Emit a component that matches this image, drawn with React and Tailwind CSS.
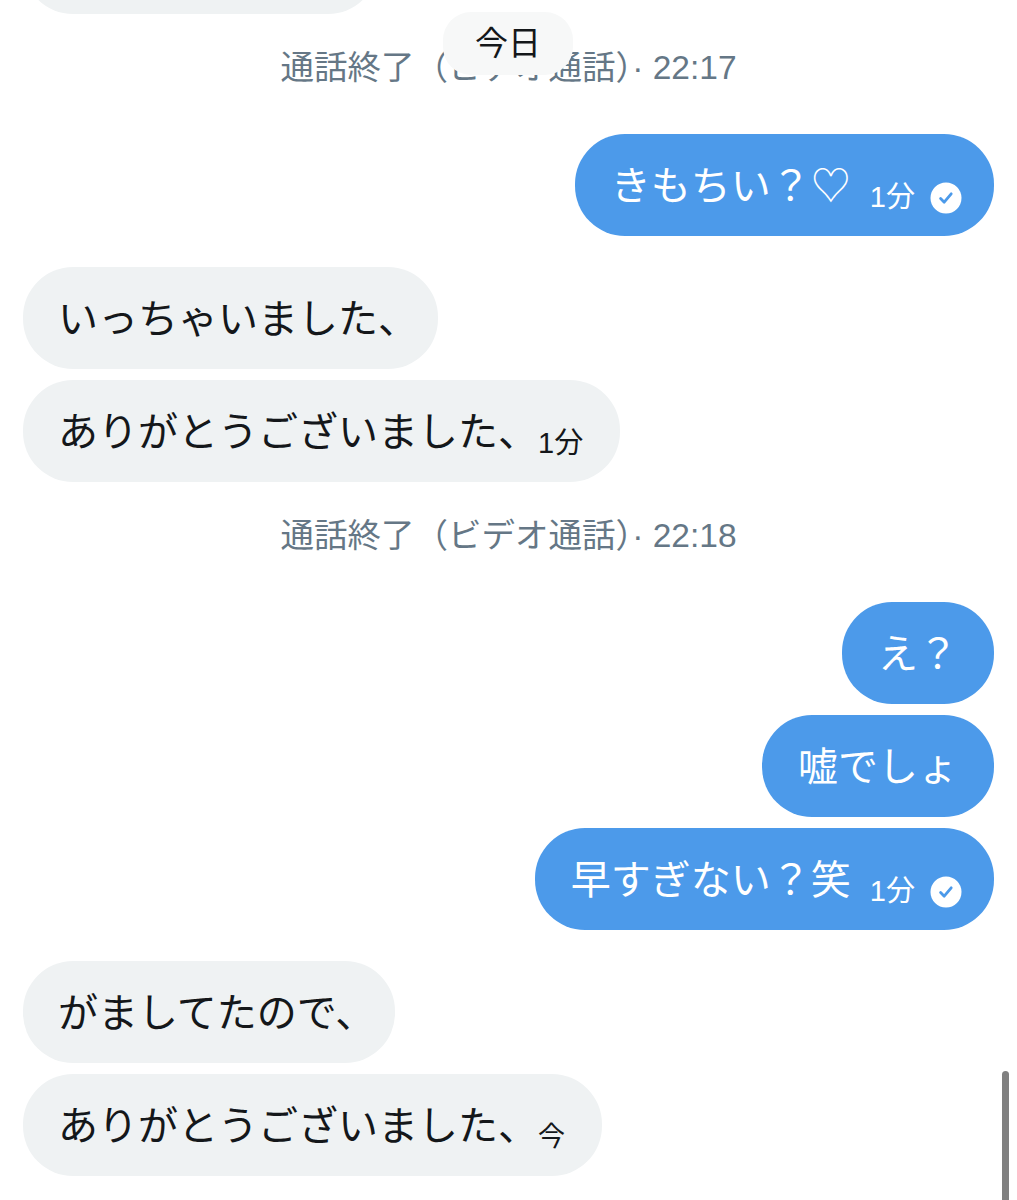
const CheckBadge = () => (
  <svg width="32" height="32" viewBox="0 0 32 32" className="ml-[15px] shrink-0">
    <circle cx="16" cy="16" r="15.5" fill="#ffffff" />
    <path
      d="M10.6 16.6 L14.2 20.2 L21.2 11.8"
      fill="none"
      stroke="#4c9aea"
      strokeWidth="2.8"
      strokeLinecap="round"
      strokeLinejoin="round"
    />
  </svg>
);

const Received = ({ text, time, timeSmall }) => (
  <div
    className={`flex h-[102px] w-fit items-center rounded-[50px] bg-[#eff2f3] pl-[35px] text-[#14171a] ${
      time ? "pr-[37px]" : "pr-[20px]"
    }`}
  >
    <span className="mt-[2px] whitespace-nowrap text-[40px] leading-none">{text}</span>
    {time && (
      <span
        className={`mt-[24px] whitespace-nowrap leading-none ${
          timeSmall ? "text-[27px]" : "text-[29px]"
        }`}
      >
        {time}
      </span>
    )}
  </div>
);

const Sent = ({ text, time }) => (
  <div
    className={`flex h-[102px] w-fit items-center self-end rounded-[50px] bg-[#4c9aea] pl-[36px] text-white ${
      time ? "pr-[32px]" : "pr-[36px]"
    }`}
  >
    <span className="mt-[1px] whitespace-nowrap text-[40px] leading-none">{text}</span>
    {time && (
      <>
        <span className="ml-[19px] mt-[24px] whitespace-nowrap text-[29px] leading-none">
          {time}
        </span>
        <span className="mt-[26px]">
          <CheckBadge />
        </span>
      </>
    )}
  </div>
);

const CallEnded = ({ label, time }) => (
  <div className="flex h-[120px] justify-center pt-[31px] text-[33.5px] leading-[46px] text-[#657786]">
    <span className="whitespace-nowrap">
      {label}· {time}
    </span>
  </div>
);

export default function App() {
  return (
    <div
      className="relative h-[1200px] w-full overflow-hidden bg-white"
      style={{ fontFamily: '"Liberation Sans", "Noto Sans CJK JP", sans-serif' }}
    >
      <div className="mt-[-88px] flex flex-col px-[23px]">
        <div className="h-[102px] w-[355px] rounded-[50px] bg-[#eff2f3]" />
        <CallEnded label="通話終了（ビデオ通話）" time="22:17" />
        <Sent text="きもちい？♡" time="1分" />

        <div className="mt-[31px] flex flex-col gap-[11px]">
          <Received text="いっちゃいました、" />
          <Received text="ありがとうございました、" time="1分" />
        </div>

        <CallEnded label="通話終了（ビデオ通話）" time="22:18" />

        <div className="flex flex-col gap-[11px]">
          <Sent text="え？" />
          <Sent text="嘘でしょ" />
          <Sent text="早すぎない？笑" time="1分" />
        </div>

        <div className="mt-[31px] flex flex-col gap-[11px]">
          <Received text="がましてたので、" />
          <Received text="ありがとうございました、" time="今" timeSmall />
        </div>
      </div>

      {/* sticky date pill */}
      <div className="absolute left-[443px] top-[12px] flex h-[63px] w-[130px] items-center justify-center rounded-[28px] bg-[#f7f8f8] pt-[1px] text-[33px] text-[#14171a]">
        今日
      </div>

      {/* scrollbar */}
      <div className="absolute left-[1002px] top-[1071px] h-[135px] w-[7px] rounded-full bg-[#808080]" />
    </div>
  );
}
